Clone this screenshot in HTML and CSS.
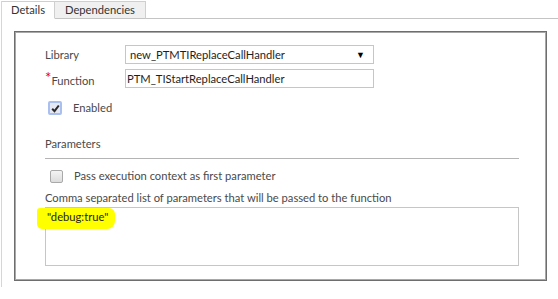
FILE: index.html
```html
<!DOCTYPE html>
<html>
<head>
<meta charset="utf-8">
<link rel="stylesheet" href="styles.css">
</head>
<body>
<div class="panel">
  <div class="tabs">
    <div class="tab active">Details</div>
    <div class="tab">Dependencies</div>
    <div class="tab-fill"></div>
  </div>
  <div class="box">
    <div class="row first">
      <div class="label">Library</div>
      <div class="field select"><span>new_PTMTIReplaceCallHandler</span><span class="arrow">▼</span></div>
    </div>
    <div class="row second">
      <div class="label"><span class="req">*</span><span class="req-label">Function</span></div>
      <div class="field"><span class="inp">PTM_TIStartReplaceCallHandler</span></div>
    </div>
    <div class="check-row enabled">
      <span class="cb checked"><svg width="9" height="9" viewBox="0 0 9 9"><path d="M1.2 4.8 L3.5 7.2 L7.8 1.5" fill="none" stroke="#2a2a2a" stroke-width="2"/></svg></span>
      <span class="cb-text">Enabled</span>
    </div>
    <div class="section">Parameters</div>
    <div class="check-row pass">
      <span class="cb"></span>
      <span class="cb-text">Pass execution context as first parameter</span>
    </div>
    <div class="hint">Comma separated list of parameters that will be passed to the function</div>
    <div class="textarea"><span class="mark">"debug:true"</span></div>
  </div>
</div>
</body>
</html>
```

FILE: styles.css
```css
html, body {
  margin: 0;
  padding: 0;
  background: #fff;
}
body {
  font-family: Lato, "Open Sans", sans-serif;
  font-size: 11.2px;
  line-height: 14px;
  color: #4a4a4a;
}
.panel {
  margin-left: 1px;
  margin-top: 1px;
  border-left: 1px solid #d6d6d6;
  height: 286px;
  width: 557px;
}
.tabs {
  display: flex;
  height: 18px;
}
.tab {
  box-sizing: border-box;
  height: 18px;
  line-height: 16px;
  border-top: 1px solid #cfcfcf;
  border-right: 1px solid #cfcfcf;
  border-bottom: 1px solid #c4c4c4;
  background: #f0f0f0;
  color: #333;
  width: 91px;
  text-align: center;
}
.tab.active {
  width: 53px;
  background: #fff;
  border-bottom-color: #fff;
}
.tab-fill {
  flex: 1;
  border-bottom: 1px solid #c4c4c4;
}
.box {
  margin: 12px 0 0 12px;
  width: 533px;
  height: 250px;
  box-sizing: border-box;
  border: 1px solid #6e6e6e;
  box-shadow: inset 1px 1px 0 #a8a8a8, inset -1px -1px 0 #a8a8a8;
  padding: 13px 0 0 30px;
}
.row {
  display: flex;
  align-items: center;
}
.row.second {
  margin-top: 5px;
}
.label {
  width: 80px;
}
.req {
  color: #d00;
  font-size: 15px;
  line-height: 10px;
  position: relative;
  top: 0px;
}
.req-label {
  position: relative;
  top: 2px;
}
.field {
  box-sizing: border-box;
  width: 249px;
  height: 19px;
  border: 1px solid #c6c6c6;
  display: flex;
  align-items: center;
  justify-content: space-between;
  padding: 0 8px 0 4px;
  color: #1e1e1e;
}
.field .inp {
  margin-left: -3px;
}
.arrow {
  font-size: 9px;
  color: #000;
}
.check-row {
  display: flex;
  align-items: center;
}
.check-row.enabled {
  margin-top: 13px;
  margin-left: 3px;
}
.cb {
  box-sizing: border-box;
  width: 14px;
  height: 14px;
  border: 1px solid #a9a9a9;
  border-radius: 2px;
  background: linear-gradient(#f4f4f4, #dcdcdc);
  display: flex;
  align-items: center;
  justify-content: center;
}
.cb.checked {
  border: 2px solid #a9bff0;
  background: #e4e8f2;
}
.cb-text {
  margin-left: 11px;
}
.section {
  margin-top: 22px;
  padding-bottom: 7px;
  border-bottom: 1px solid #b4b4b4;
  width: 474px;
}
.check-row.pass {
  margin-top: 10px;
  margin-left: 5px;
}
.check-row.pass .cb {
  width: 13px;
  height: 13px;
}
.hint {
  margin-top: 8px;
}
.textarea {
  box-sizing: border-box;
  margin-top: 2px;
  width: 474px;
  height: 59px;
  border: 1px solid #c6c6c6;
}
.mark {
  display: inline-block;
  background: #ffff00;
  color: #1e1e1e;
  margin-left: -9px;
  padding: 2px 7px 5px 10px;
  border-radius: 3px 6px 8px 5px;
}
```
